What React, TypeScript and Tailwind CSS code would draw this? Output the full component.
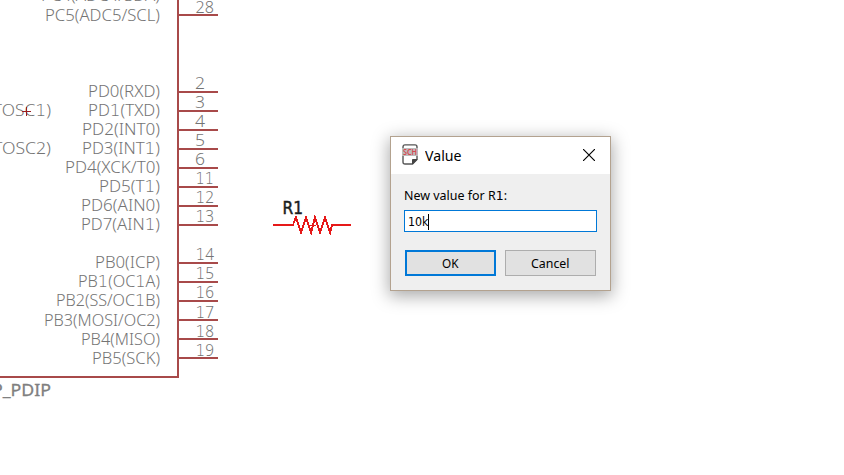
import { Fragment } from 'react';

// `drop` lowers a pin's texts by one pixel relative to its line.
type Pin = { label: string; number: string; y: number; left: number; drop?: number };

const pins: Pin[] = [
  { label: 'PC4(ADC4/SDA)', number: '', y: -4, left: 42 },
  { label: 'PC5(ADC5/SCL)', number: '28', y: 15, left: 46, drop: 1 },
  { label: 'PD0(RXD)', number: '2', y: 92, left: 89 },
  { label: 'PD1(TXD)', number: '3', y: 111, left: 89 },
  { label: 'PD2(INT0)', number: '4', y: 130, left: 83 },
  { label: 'PD3(INT1)', number: '5', y: 149, left: 83 },
  { label: 'PD4(XCK/T0)', number: '6', y: 168, left: 66 },
  { label: 'PD5(T1)', number: '11', y: 187, left: 100 },
  { label: 'PD6(AIN0)', number: '12', y: 206, left: 82 },
  { label: 'PD7(AIN1)', number: '13', y: 225, left: 82 },
  { label: 'PB0(ICP)', number: '14', y: 263, left: 96 },
  { label: 'PB1(OC1A)', number: '15', y: 282, left: 79 },
  { label: 'PB2(SS/OC1B)', number: '16', y: 301, left: 57 },
  { label: 'PB3(MOSI/OC2)', number: '17', y: 320, left: 45, drop: 1 },
  { label: 'PB4(MISO)', number: '18', y: 339, left: 82, drop: 1 },
  { label: 'PB5(SCK)', number: '19', y: 358, left: 93, drop: 1 },
];

// Sets the digit one in a face that gives it a foot.
function Footed({ text }: { text: string }) {
  return (
    <>
      {text.split(/(1)/).map((part, i) =>
        part === '1' ? (
          <tspan key={i} className="font-['DejaVu_Sans_Light','DejaVu_Sans',sans-serif] font-extralight">1</tspan>
        ) : (
          <Fragment key={i}>{part}</Fragment>
        ),
      )}
    </>
  );
}

function Schematic() {
  return (
    <svg width="844" height="475" viewBox="0 0 844 475" className="block font-['Noto_Sans',sans-serif]">
      <g stroke="#a84a4a" strokeWidth="2" fill="none" shapeRendering="crispEdges">
        <path d="M178 0V377H0" />
        {pins.map((p) => (
          <path key={p.label} d={`M178 ${p.y}H218`} />
        ))}
      </g>
      <g fill="#747474" fontSize="15.5" fontWeight="300">
        {pins.map((p) => (
          <g key={p.label}>
            <text x={p.left - 1} y={p.y + 5 + (p.drop ?? 0)} textLength={161 - p.left} lengthAdjust="spacingAndGlyphs">
              <Footed text={p.label} />
            </text>
            {p.number && (
              <text
                x={p.number.length > 1 ? 195.5 : 195}
                y={p.y - 3 + (p.drop ?? 0)}
                textLength={p.number.length > 1 ? 18.5 : 10}
                lengthAdjust="spacingAndGlyphs"
              >
                <Footed text={p.number} />
              </text>
            )}
          </g>
        ))}
        <text x="-12" y="116" textLength="63" lengthAdjust="spacingAndGlyphs"><Footed text="(TOSC1)" /></text>
        <text x="-12" y="154" textLength="63" lengthAdjust="spacingAndGlyphs">(TOSC2)</text>
      </g>
      <path d="M22 111.5H31M26.500 107V116" stroke="#981b20" shapeRendering="crispEdges" />
      <text x="-8" y="396" fill="#808080" fontSize="17" fontWeight="400" stroke="#808080" strokeWidth=".3" textLength="59" lengthAdjust="spacingAndGlyphs">P_PDIP</text>
      <text
        x="282.500"
        y="214"
        fill="#1b1d20"
        stroke="#1b1d20"
        strokeWidth=".5"
        fontSize="17"
        className="font-['DejaVu_Sans',sans-serif]"
        textLength="20.500"
        lengthAdjust="spacingAndGlyphs"
      >
        R1
      </text>
      <path
        d="M273 225H293L296 217L301 233L306 217L311 233L315 217L320 233L325 217L330 233L332 225H351M309 225.500H316"
        fill="none"
        stroke="#e61919"
        strokeWidth="1.800"
        shapeRendering="crispEdges"
      />
    </svg>
  );
}

function SheetIcon() {
  return (
    <svg width="16" height="21" viewBox="0 0 16 21" className="-translate-y-px">
      <path d="M3 .9H13Q15 .9 15 3V15.500L10.500 20H3Q1 20 1 18V3Q1 .9 3 .9Z" fill="#fff" stroke="#555" strokeWidth="1.400" />
      <path d="M10.500 20V15.500H15Z" fill="#444" stroke="#444" />
      <rect y="4" width="16" height="8" fill="#bcbcbc" />
      <text x="1" y="11" fontSize="8" fontWeight="600" fill="#d84650" textLength="14" lengthAdjust="spacingAndGlyphs">SCH</text>
    </svg>
  );
}

function ValueDialog() {
  return (
    <section className="absolute left-[390px] top-[136px] flex h-[155px] w-[221px] flex-col border border-[#b3a28f] bg-[#efefef] font-['Noto_Sans',sans-serif] text-black shadow-[0_4px_16px_1px_rgba(0,0,0,0.34)]">
      <header className="flex h-[37px] shrink-0 items-center bg-white pl-[11px] pr-[15px]">
        <SheetIcon />
        <h1 className="ml-[7px] grow text-[14px] leading-5">
          <svg width="40" height="20" className="block">
            <text x="0" y="15" textLength="36.500" lengthAdjust="spacingAndGlyphs">Value</text>
          </svg>
        </h1>
        <button aria-label="Close">
          <svg width="12" height="12" viewBox="0 0 12 12" className="block -translate-y-px">
            <path d="M0 0L12 12M12 0L0 12" stroke="#000" strokeWidth="1.150" />
          </svg>
        </button>
      </header>
      <div className="flex flex-col px-[13px] pt-[13px] text-[12px]">
        <label className="h-4 leading-4">
          <svg width="110" height="16" className="block">
            <text x="0" y="13" textLength="103" lengthAdjust="spacingAndGlyphs">
              New value for R<tspan className="font-['DejaVu_Sans',sans-serif]">1</tspan>:
            </text>
          </svg>
        </label>
        <div className="mt-[7px] flex h-[22px] items-center border border-[#0078d7] bg-white pl-[3px]">
          <svg width="24" height="18" className="block">
            <text x="0" y="14" className="font-['DejaVu_Sans',sans-serif]" textLength="20.500" lengthAdjust="spacingAndGlyphs">10k</text>
            <path d="M20.500 2V18" stroke="#000" shapeRendering="crispEdges" />
          </svg>
        </div>
        <div className="mt-[18px] flex gap-[9px] pl-px">
          <button className="h-[26px] w-[91px] border-2 border-[#0078d7] bg-[#e1e1e1]">
            <svg width="18" height="16" className="mx-auto block translate-y-px">
              <text x="0" y="12" textLength="16.500" lengthAdjust="spacingAndGlyphs">OK</text>
            </svg>
          </button>
          <button className="h-[26px] w-[91px] border border-[#adadad] bg-[#e1e1e1]">
            <svg width="40" height="16" className="mx-auto block translate-y-px">
              <text x="0" y="12" textLength="38.500" lengthAdjust="spacingAndGlyphs">Cancel</text>
            </svg>
          </button>
        </div>
      </div>
    </section>
  );
}

export default function App() {
  return (
    <main className="relative h-[475px] w-[844px] overflow-hidden bg-white">
      <Schematic />
      <ValueDialog />
    </main>
  );
}
